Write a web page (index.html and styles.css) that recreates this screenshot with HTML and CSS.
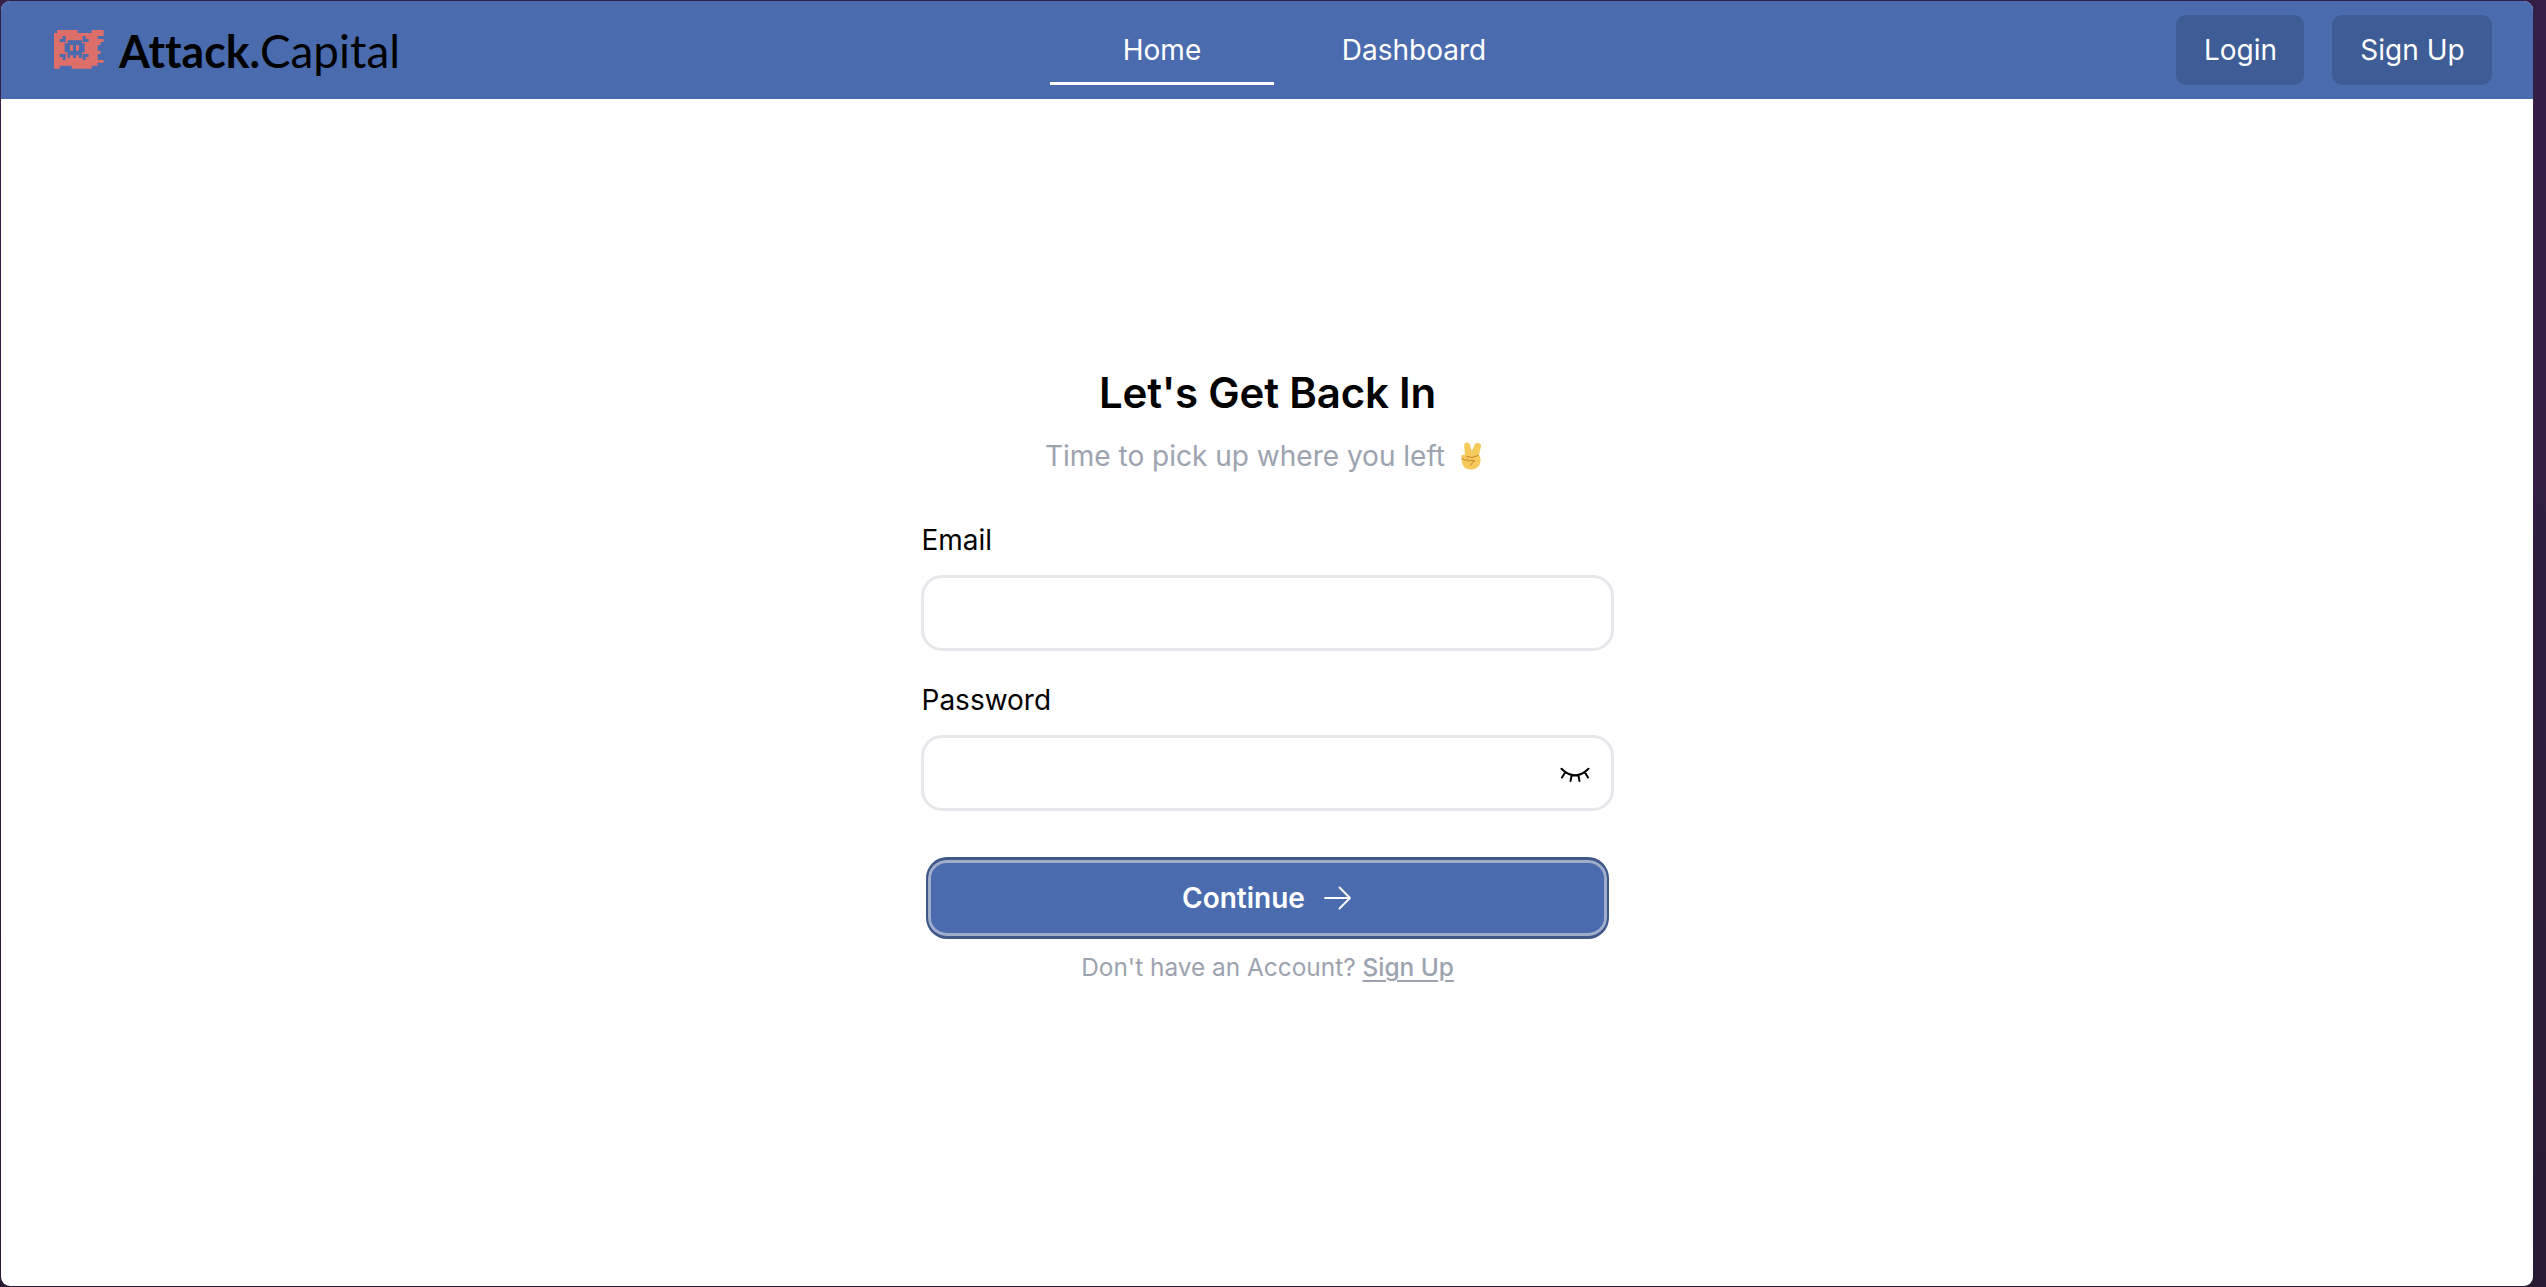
FILE: index.html
```html
<!DOCTYPE html>
<html lang="en">
<head>
<meta charset="utf-8">
<title>Attack.Capital</title>
<link rel="stylesheet" href="styles.css">
</head>
<body>
<div class="window">
  <header class="navbar">
    <a class="brand">
      <svg class="flag" viewBox="163 90 150 117">
        <path fill="#dd6e6a" d="M172 90H234V99H276V90H312V108H294V117H312V126H303V135H294V153H303V162H294V180H312V188H294V197H276V206H216V197H180V206H163V99H172Z"/>
        <path fill="#4a6cae" d="M189 108H198V126H180V117H189ZM249 108H258V117H267V126H249ZM180 162H198V180H189V171H180ZM249 162H267V171H258V180H249ZM204 121H247V130H255V157H247V174H238V166H229V174H220V166H211V174H204V157H195V130H204Z"/>
        <path fill="#dd6e6a" d="M211 135H220V152H211ZM229 135H238V152H229Z"/>
      </svg>
      <svg class="wordmark" width="290" height="60" viewBox="0 0 290 60">
        <text class="word-bold" x="1" y="46" textLength="141" lengthAdjust="spacingAndGlyphs">Attack.</text>
        <text class="word-light" x="142" y="46" textLength="140" lengthAdjust="spacingAndGlyphs">Capital</text>
      </svg>
    </a>
    <nav class="links">
      <a class="link active">Home</a>
      <a class="link">Dashboard</a>
    </nav>
    <div class="auth">
      <a class="auth-btn login">Login</a>
      <a class="auth-btn signup">Sign Up</a>
    </div>
  </header>
  <main class="content">
    <h1>Let's Get Back In</h1>
    <p class="subtitle"><span>Time to pick up where you left</span>
      <svg class="peace" viewBox="0 0 20 28">
        <path fill="#f5ca5b" d="M4 14 3.2 3Q3.4.4 5.7.4T8.8 2.5L10.8 9 14 2Q15.4.3 18 1.2T20 4L18 13Q20 15 19.5 19 18.5 27.5 10 27.5 2 27.5.8 20L.3 15Q.2 12 4 13Z"/>
        <path fill="none" stroke="#c87f2f" stroke-width="1" stroke-linecap="round" stroke-linejoin="round" d="M1 16.5 5 18.5 7 17M6 14.5 11 15.5 17 13.5M7 19 12 18.2 14 19.5M13 18.5 9.5 23.5"/>
      </svg>
    </p>
    <form class="form">
      <label for="email">Email</label>
      <input id="email" type="email">
      <label for="password">Password</label>
      <div class="field">
        <input id="password" type="password">
        <svg class="eye" viewBox="0 0 30 16" fill="none" stroke="#000" stroke-width="2" stroke-linecap="round">
          <path d="M1.5 1.8Q15 15 28.5 1.8M5.2 5.2 2 10.5M11.6 8.6 10.5 14M18.4 8.6 19.5 14M24.8 5.2 28 10.5"/>
        </svg>
      </div>
      <button type="button" class="continue">Continue
        <svg class="arrow" viewBox="0 0 28 24" fill="none" stroke="#fff" stroke-width="1.8" stroke-linecap="round" stroke-linejoin="round">
          <path d="M1 12H26M15.5 1.5 26 12 15.5 22.5"/>
        </svg>
      </button>
    </form>
    <p class="footnote">Don't have an Account? <a>Sign Up</a></p>
  </main>
</div>
</body>
</html>
```
FILE: styles.css
```css
* { box-sizing: border-box; }
body {
  margin: 0;
  height: 1287px;
  padding: 1px 13px 1px 1px;
  background: linear-gradient(#341f47, #291a33);
  font: 28px/42px Inter, sans-serif;
  color: #000;
  overflow: hidden;
}
.window { height: 1285px; background: #fff; border-radius: 9px; overflow: hidden; }
.navbar {
  display: grid;
  grid-template-columns: 1049px 1fr auto;
  align-items: center;
  height: 98px;
  padding-right: 41px;
  background: #4a6cae;
  color: #fff;
}
.brand { display: flex; align-items: center; gap: 14px; padding-left: 53px; }
.flag { width: 50px; height: 39px; margin-top: -2px; }
.wordmark {
  margin-top: 4px;
  font-family: Lato, sans-serif;
  font-size: 46px;
  font-variant-ligatures: none;
}
.word-bold { font-weight: 700; }
.word-light { font-weight: 400; }
.links { display: flex; gap: 28px; }
.link { width: 224px; height: 70px; line-height: 70px; text-align: center; border-bottom: 3px solid transparent; }
.active { border-bottom-color: #fff; }
.auth { display: flex; gap: 28px; }
.auth-btn { height: 70px; line-height: 70px; text-align: center; border-radius: 10px; background: #3e5c95; }
.login { width: 128px; padding-left: 1px; }
.signup { width: 160px; padding-left: 1px; }
.content { display: flex; flex-direction: column; align-items: center; padding-top: 268px; }
h1 { margin: 0; font-size: 42px; font-weight: 600; line-height: 52px; letter-spacing: -0.2px; padding-left: 1px; }
.subtitle { display: flex; align-items: center; gap: 16px; margin: 16px 0 0; color: #9ca3af; }
.peace { width: 20px; height: 28px; margin-right: 8px; }
.form { display: flex; flex-direction: column; width: 693px; margin-top: 42px; }
label { height: 42px; padding-left: 1px; }
input { width: 693px; height: 76px; margin: 14px 0 28px; border: 3px solid #e5e7eb; border-radius: 21px; background: #fff; outline: none; }
.field { position: relative; display: flex; }
.eye { position: absolute; right: 23.5px; top: 46px; width: 30px; height: 16px; }
.field input { margin-bottom: 0; }
.continue {
  display: flex;
  justify-content: center;
  align-items: center;
  gap: 19px;
  width: 683px;
  height: 82px;
  margin: 46px auto 0;
  padding: 0;
  border: solid #3f5888;
  border-width: 3px 2px;
  border-radius: 21px;
  background: #4a6cae;
  box-shadow: inset 0 0 0 3px #a0adca;
  color: #fff;
  font: 600 28px/42px Inter, sans-serif;
}
.arrow { width: 28px; height: 24px; }
.footnote { margin: 11px 0 0; padding-left: 1px; font-size: 24.4px; line-height: 35px; color: #9ca3af; }
.footnote a { font-weight: 500; text-decoration: underline; text-underline-offset: 4px; text-decoration-thickness: 2px; }
```
